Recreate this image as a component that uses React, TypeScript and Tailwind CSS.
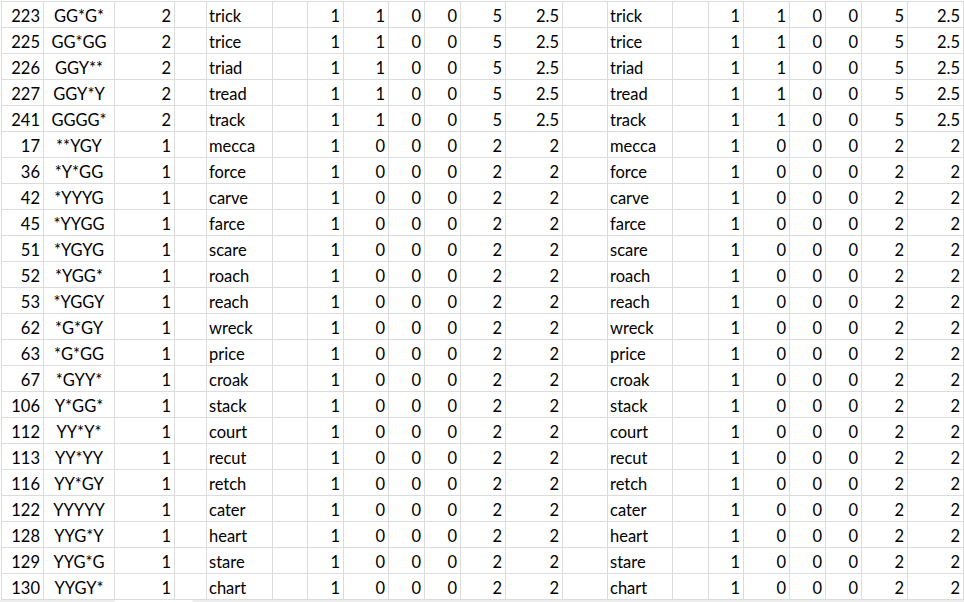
import React from "react";

type Row = [string, string, string, string, string, string, string, string, string, string];

const rows: Row[] = [
  ["223", "GG*G*", "2", "trick", "1", "1", "0", "0", "5", "2.5"],
  ["225", "GG*GG", "2", "trice", "1", "1", "0", "0", "5", "2.5"],
  ["226", "GGY**", "2", "triad", "1", "1", "0", "0", "5", "2.5"],
  ["227", "GGY*Y", "2", "tread", "1", "1", "0", "0", "5", "2.5"],
  ["241", "GGGG*", "2", "track", "1", "1", "0", "0", "5", "2.5"],
  ["17", "**YGY", "1", "mecca", "1", "0", "0", "0", "2", "2"],
  ["36", "*Y*GG", "1", "force", "1", "0", "0", "0", "2", "2"],
  ["42", "*YYYG", "1", "carve", "1", "0", "0", "0", "2", "2"],
  ["45", "*YYGG", "1", "farce", "1", "0", "0", "0", "2", "2"],
  ["51", "*YGYG", "1", "scare", "1", "0", "0", "0", "2", "2"],
  ["52", "*YGG*", "1", "roach", "1", "0", "0", "0", "2", "2"],
  ["53", "*YGGY", "1", "reach", "1", "0", "0", "0", "2", "2"],
  ["62", "*G*GY", "1", "wreck", "1", "0", "0", "0", "2", "2"],
  ["63", "*G*GG", "1", "price", "1", "0", "0", "0", "2", "2"],
  ["67", "*GYY*", "1", "croak", "1", "0", "0", "0", "2", "2"],
  ["106", "Y*GG*", "1", "stack", "1", "0", "0", "0", "2", "2"],
  ["112", "YY*Y*", "1", "court", "1", "0", "0", "0", "2", "2"],
  ["113", "YY*YY", "1", "recut", "1", "0", "0", "0", "2", "2"],
  ["116", "YY*GY", "1", "retch", "1", "0", "0", "0", "2", "2"],
  ["122", "YYYYY", "1", "cater", "1", "0", "0", "0", "2", "2"],
  ["128", "YYG*Y", "1", "heart", "1", "0", "0", "0", "2", "2"],
  ["129", "YYG*G", "1", "stare", "1", "0", "0", "0", "2", "2"],
  ["130", "YYGY*", "1", "chart", "1", "0", "0", "0", "2", "2"],
];

const base =
  "h-[26px] shrink-0 border-r border-b border-[#dcdcdc] pt-[3px] leading-[22px] overflow-hidden whitespace-nowrap";
const R = base + " text-right pr-[3px]";
const L = base + " text-left pl-[2px]";
const C = base + " text-center";
const E = base;

function DataRow({ r }: { r: Row }) {
  const [idx, pat, n, word, a, b, c, d, e, f] = r;
  return (
    <div className="flex">
      <div className={R + " w-[42px]"}>{idx}</div>
      <div className={C + " w-[71px]"}>{pat}</div>
      <div className={R + " w-[60px]"}>{n}</div>
      <div className={E + " w-[32px]"}></div>
      <div className={L + " w-[66px]"}>{word}</div>
      <div className={E + " w-[35px]"}></div>
      <div className={R + " w-[36px]"}>{a}</div>
      <div className={R + " w-[45px]"}>{b}</div>
      <div className={R + " w-[36px]"}>{c}</div>
      <div className={R + " w-[36px]"}>{d}</div>
      <div className={R + " w-[45px]"}>{e}</div>
      <div className={R + " w-[57px]"}>{f}</div>
      <div className={E + " w-[45px]"}></div>
      <div className={L + " w-[65px]"}>{word}</div>
      <div className={E + " w-[36px]"}></div>
      <div className={R + " w-[35px]"}>{a}</div>
      <div className={R + " w-[46px]"}>{b}</div>
      <div className={R + " w-[36px]"}>{c}</div>
      <div className={R + " w-[36px]"}>{d}</div>
      <div className={R + " w-[46px]"}>{e}</div>
      <div className={R + " w-[56px]"}>{f}</div>
    </div>
  );
}

export default function App() {
  return (
    <div
      className="w-[964px] h-[602px] overflow-hidden bg-white text-black text-[16.5px] pt-px"
      style={{ fontFamily: "Lato, 'Open Sans', sans-serif" }}
    >
      <div className="ml-px border-l border-t border-[#dcdcdc] w-[1000px]">
        {rows.map((r, i) => (
          <DataRow key={i} r={r} />
        ))}
      </div>
      <div className="h-[3px] bg-[#ededed]">
        <div className="ml-[114px] w-[79px] h-[3px] bg-white rounded-t-[3px]" />
      </div>
    </div>
  );
}
